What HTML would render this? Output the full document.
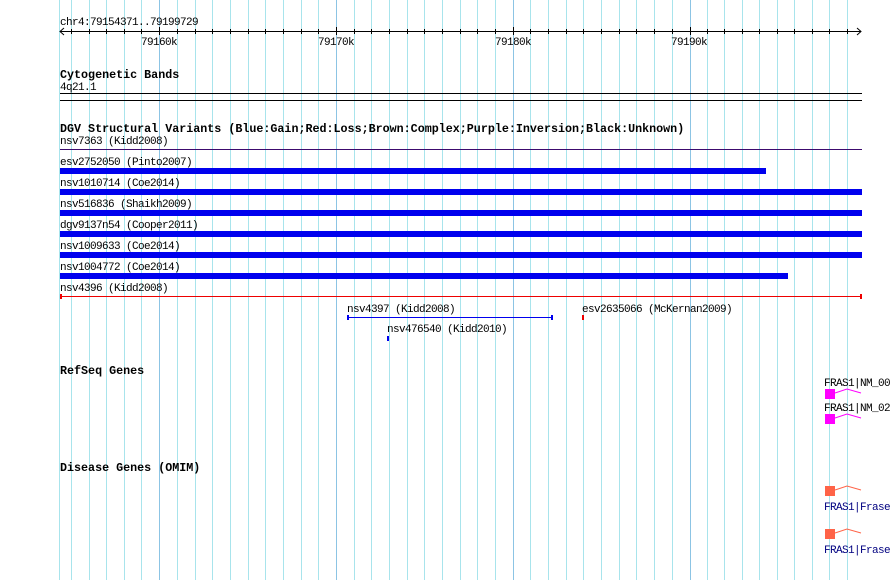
<!DOCTYPE html>
<html><head><meta charset="utf-8"><style>
html,body{margin:0;padding:0;background:#fff;width:890px;height:580px;overflow:hidden}
svg{display:block}
text{font-family:"Liberation Mono","DejaVu Sans Mono",monospace;font-size:11px;letter-spacing:-0.6px;fill:#000}
.b{font-weight:bold;font-size:11.7px;letter-spacing:0}
</style></head><body>
<svg width="890" height="580" viewBox="0 0 890 580" xmlns="http://www.w3.org/2000/svg" shape-rendering="crispEdges">
<g id="grid" stroke-width="1"></g>
<line x1="59.5" y1="0" x2="59.5" y2="580" stroke="#a8e4ec"/>
<script>
</script>
<g stroke="#a8e4ec">
<line x1="71.5" y1="0" x2="71.5" y2="580"/><line x1="89.5" y1="0" x2="89.5" y2="580"/><line x1="106.5" y1="0" x2="106.5" y2="580"/><line x1="124.5" y1="0" x2="124.5" y2="580"/><line x1="141.5" y1="0" x2="141.5" y2="580"/>
<line x1="177.5" y1="0" x2="177.5" y2="580"/><line x1="195.5" y1="0" x2="195.5" y2="580"/><line x1="212.5" y1="0" x2="212.5" y2="580"/><line x1="230.5" y1="0" x2="230.5" y2="580"/><line x1="248.5" y1="0" x2="248.5" y2="580"/><line x1="265.5" y1="0" x2="265.5" y2="580"/><line x1="283.5" y1="0" x2="283.5" y2="580"/><line x1="301.5" y1="0" x2="301.5" y2="580"/><line x1="318.5" y1="0" x2="318.5" y2="580"/>
<line x1="354.5" y1="0" x2="354.5" y2="580"/><line x1="371.5" y1="0" x2="371.5" y2="580"/><line x1="389.5" y1="0" x2="389.5" y2="580"/><line x1="407.5" y1="0" x2="407.5" y2="580"/><line x1="424.5" y1="0" x2="424.5" y2="580"/><line x1="442.5" y1="0" x2="442.5" y2="580"/><line x1="460.5" y1="0" x2="460.5" y2="580"/><line x1="477.5" y1="0" x2="477.5" y2="580"/><line x1="495.5" y1="0" x2="495.5" y2="580"/>
<line x1="530.5" y1="0" x2="530.5" y2="580"/><line x1="548.5" y1="0" x2="548.5" y2="580"/><line x1="566.5" y1="0" x2="566.5" y2="580"/><line x1="583.5" y1="0" x2="583.5" y2="580"/><line x1="601.5" y1="0" x2="601.5" y2="580"/><line x1="619.5" y1="0" x2="619.5" y2="580"/><line x1="636.5" y1="0" x2="636.5" y2="580"/><line x1="654.5" y1="0" x2="654.5" y2="580"/><line x1="672.5" y1="0" x2="672.5" y2="580"/>
<line x1="707.5" y1="0" x2="707.5" y2="580"/><line x1="724.5" y1="0" x2="724.5" y2="580"/><line x1="742.5" y1="0" x2="742.5" y2="580"/><line x1="759.5" y1="0" x2="759.5" y2="580"/><line x1="777.5" y1="0" x2="777.5" y2="580"/><line x1="794.5" y1="0" x2="794.5" y2="580"/><line x1="812.5" y1="0" x2="812.5" y2="580"/><line x1="829.5" y1="0" x2="829.5" y2="580"/><line x1="847.5" y1="0" x2="847.5" y2="580"/>
</g>
<g stroke="#8cc4e4">
<line x1="159.5" y1="0" x2="159.5" y2="580"/><line x1="336.5" y1="0" x2="336.5" y2="580"/><line x1="513.5" y1="0" x2="513.5" y2="580"/><line x1="690.5" y1="0" x2="690.5" y2="580"/>
</g>
<!-- ruler -->
<g stroke="#000">
<line x1="60" y1="31.5" x2="861" y2="31.5"/>
<polyline points="64,28 60,31.5 64,35" fill="none" shape-rendering="auto"/>
<polyline points="857,28 861,31.5 857,35" fill="none" shape-rendering="auto"/>
<path d="M71.5 29v5M89.5 29v5M106.5 29v5M124.5 29v5M141.5 29v5M177.5 29v5M195.5 29v5M212.5 29v5M230.5 29v5M248.5 29v5M265.5 29v5M283.5 29v5M301.5 29v5M318.5 29v5M354.5 29v5M371.5 29v5M389.5 29v5M407.5 29v5M424.5 29v5M442.5 29v5M460.5 29v5M477.5 29v5M495.5 29v5M530.5 29v5M548.5 29v5M566.5 29v5M583.5 29v5M601.5 29v5M619.5 29v5M636.5 29v5M654.5 29v5M672.5 29v5M707.5 29v5M724.5 29v5M742.5 29v5M759.5 29v5M777.5 29v5M794.5 29v5M812.5 29v5M829.5 29v5M847.5 29v5M159.5 27v8M336.5 27v8M513.5 27v8M690.5 27v8"/>
</g>
<text x="60" y="25">chr4:79154371..79199729</text>
<text x="141" y="45">79160k</text>
<text x="318" y="45">79170k</text>
<text x="495" y="45">79180k</text>
<text x="671" y="45">79190k</text>
<!-- cyto -->
<text class="b" x="60" y="78">Cytogenetic Bands</text>
<text x="60" y="90">4q21.1</text>
<rect x="60" y="93" width="802" height="1" fill="#000"/>
<rect x="60" y="100" width="802" height="1" fill="#000"/>
<!-- DGV -->
<text class="b" x="60" y="132">DGV Structural Variants (Blue:Gain;Red:Loss;Brown:Complex;Purple:Inversion;Black:Unknown)</text>
<text x="60" y="144">nsv7363 (Kidd2008)</text>
<rect x="60" y="149" width="802" height="1" fill="#3c0a6e"/>
<text x="60" y="165">esv2752050 (Pinto2007)</text>
<rect x="60" y="168" width="706" height="6" fill="#0000ee"/>
<text x="60" y="186">nsv1010714 (Coe2014)</text>
<rect x="60" y="189" width="802" height="6" fill="#0000ee"/>
<text x="60" y="207">nsv516836 (Shaikh2009)</text>
<rect x="60" y="210" width="802" height="6" fill="#0000ee"/>
<text x="60" y="228">dgv9137n54 (Cooper2011)</text>
<rect x="60" y="231" width="802" height="6" fill="#0000ee"/>
<text x="60" y="249">nsv1009633 (Coe2014)</text>
<rect x="60" y="252" width="802" height="6" fill="#0000ee"/>
<text x="60" y="270">nsv1004772 (Coe2014)</text>
<rect x="60" y="273" width="728" height="6" fill="#0000ee"/>
<text x="60" y="291">nsv4396 (Kidd2008)</text>
<rect x="60" y="296" width="802" height="1" fill="#ee0000"/>
<rect x="60" y="294" width="2" height="5" fill="#ee0000"/>
<rect x="860" y="294" width="2" height="5" fill="#ee0000"/>
<text x="347" y="312">nsv4397 (Kidd2008)</text>
<rect x="347" y="317" width="206" height="1" fill="#0000ee"/>
<rect x="347" y="315" width="2" height="5" fill="#0000ee"/>
<rect x="551" y="315" width="2" height="5" fill="#0000ee"/>
<text x="582" y="312">esv2635066 (McKernan2009)</text>
<rect x="582" y="315" width="2" height="5" fill="#ee0000"/>
<text x="387" y="332">nsv476540 (Kidd2010)</text>
<rect x="387" y="336" width="2" height="5" fill="#0000ee"/>
<!-- RefSeq -->
<text class="b" x="60" y="374">RefSeq Genes</text>
<text x="824" y="386">FRAS1|NM_00</text>
<rect x="825" y="389" width="10" height="10" fill="#ff00ff"/>
<polyline points="835,393 847,389 861,393" fill="none" stroke="#ff00ff" shape-rendering="auto"/>
<text x="824" y="411">FRAS1|NM_02</text>
<rect x="825" y="414" width="10" height="10" fill="#ff00ff"/>
<polyline points="835,418 847,414 861,418" fill="none" stroke="#ff00ff" shape-rendering="auto"/>
<!-- Disease -->
<text class="b" x="60" y="471">Disease Genes (OMIM)</text>
<rect x="825" y="486" width="10" height="10" fill="#ff6347"/>
<polyline points="835,490 847,486 861,490" fill="none" stroke="#ff6347" shape-rendering="auto"/>
<text x="824" y="510" style="fill:#000080">FRAS1|Frase</text>
<rect x="825" y="529" width="10" height="10" fill="#ff6347"/>
<polyline points="835,533 847,529 861,533" fill="none" stroke="#ff6347" shape-rendering="auto"/>
<text x="824" y="553" style="fill:#000080">FRAS1|Frase</text>
</svg>
</body></html>
